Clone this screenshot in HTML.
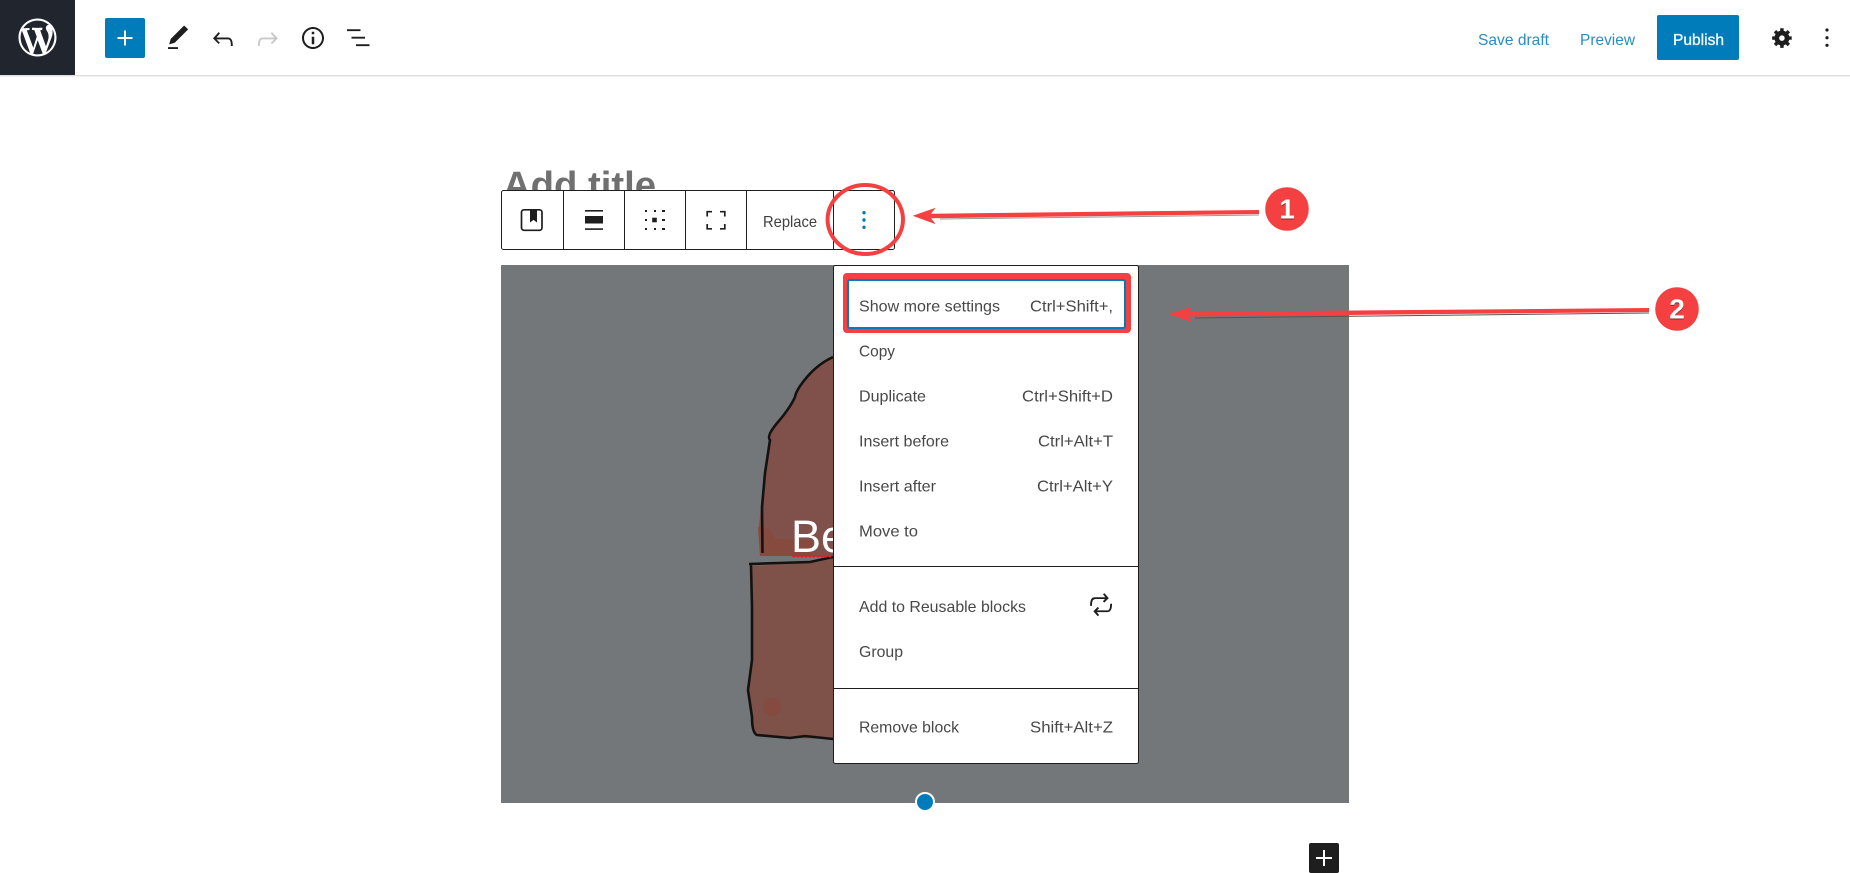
<!DOCTYPE html>
<html lang="en">
<head>
<meta charset="utf-8">
<title>Editor</title>
<style>
html,body{margin:0;padding:0;background:#fff;width:1850px;height:873px;overflow:hidden}
svg{display:block;position:absolute;left:0;top:0}
text{font-family:"Liberation Sans",sans-serif}
.m{font-size:16px;fill:#484848}
.b{font-size:16px;fill:#2a8cc0}
</style>
</head>
<body>
<svg width="1850" height="873" viewBox="0 0 1850 873" xmlns="http://www.w3.org/2000/svg">
<rect width="1850" height="873" fill="#fff"/>

<!-- Header -->
<rect x="0" y="75" width="1850" height="1.5" fill="#e0e0e0"/>
<rect width="75" height="75" fill="#20252e"/>
<g transform="translate(18.5 18.5) scale(1.9)" fill="#fff"><path d="M20 10c0-5.51-4.49-10-10-10C4.48 0 0 4.49 0 10c0 5.52 4.48 10 10 10 5.51 0 10-4.48 10-10zM7.78 15.37L4.37 6.22c.55-.02 1.17-.08 1.17-.08.5-.06.44-1.13-.06-1.11 0 0-1.45.11-2.37.11-.18 0-.37 0-.58-.01C4.12 2.69 6.87 1.11 10 1.11c2.33 0 4.45.87 6.05 2.34-.68-.11-1.65.39-1.65 1.58 0 .74.45 1.36.9 2.1.35.61.55 1.36.55 2.46 0 1.49-1.4 5-1.4 5l-3.03-8.37c.54-.02.82-.17.82-.17.5-.05.44-1.25-.06-1.22 0 0-1.44.12-2.38.12-.87 0-2.33-.12-2.33-.12-.5-.03-.56 1.2-.06 1.22l.92.08 1.26 3.41zM17.41 10c.24-.64.74-1.87.43-4.25.7 1.29 1.05 2.71 1.05 4.25 0 3.29-1.73 6.24-4.4 7.78.97-2.59 1.94-5.2 2.92-7.78zM6.1 18.09C3.12 16.65 1.11 13.53 1.11 10c0-1.3.23-2.48.72-3.59C3.25 10.3 4.67 14.2 6.1 18.09zm4.03-6.63l2.58 6.98c-.86.29-1.76.45-2.71.45-.79 0-1.57-.11-2.29-.33.81-2.38 1.62-4.74 2.42-7.1z"/></g>

<rect x="105" y="18" width="40" height="40" rx="2" fill="#007cba"/>
<g transform="translate(110 23) scale(1.25)" fill="#fff"><path d="M18 11.2h-5.2V6h-1.6v5.2H6v1.6h5.2V18h1.6v-5.2H18z"/></g>
<g transform="translate(163 23) scale(1.25)" fill="#1e1e1e"><path d="M20.1 5.1L16.9 2 6.2 12.7l-1.3 4.4 4.5-1.3L20.1 5.1zM4 20.8h8v-1.5H4v1.5z"/></g>
<g transform="translate(208 24) scale(1.25)" fill="#1e1e1e"><path d="M18.3 11.7c-.6-.6-1.4-.9-2.3-.9H6.7l2.9-3.3-1.1-1-4.5 5L8.5 16l1-1-2.7-2.7H16c.5 0 .9.2 1.3.5 1 1 1 3.4 1 4.5v.3h1.5v-.2c0-1.5 0-4.3-1.5-5.7z"/></g>
<g transform="translate(252.6 24) scale(1.25)" fill="#c8c8c8"><path d="M15.6 6.5l-1.1 1 2.9 3.3H8c-.9 0-1.7.3-2.3.9-1.4 1.5-1.4 4.2-1.4 5.7v.2h1.5v-.3c0-1.1 0-3.5 1-4.5.3-.3.7-.5 1.3-.5h9.2L14.5 15l1.1 1.1 4.6-4.6-4.6-5z"/></g>
<g transform="translate(298 23) scale(1.25)" fill="#1e1e1e"><path d="M12 3.2c-4.8 0-8.8 3.9-8.8 8.8 0 4.8 3.9 8.8 8.8 8.8 4.8 0 8.8-3.9 8.8-8.8 0-4.8-4-8.8-8.8-8.8zm0 16c-4 0-7.2-3.3-7.2-7.2C4.8 8 8 4.8 12 4.8s7.2 3.3 7.2 7.2c0 4-3.2 7.2-7.2 7.2zM11 17h2v-6h-2v6zm0-8h2V7h-2v2z"/></g>
<g transform="translate(343.25 22.8) scale(1.25)" fill="#1e1e1e"><path d="M13.8 5.2H3v1.5h10.8V5.2zm-3.6 12v1.5H21v-1.5H10.2zm7.2-6H6.6v1.5h10.8v-1.5z"/></g>

<text class="b" x="1478" y="45" textLength="71" lengthAdjust="spacingAndGlyphs">Save draft</text>
<text class="b" x="1580" y="45" textLength="55" lengthAdjust="spacingAndGlyphs">Preview</text>
<rect x="1657" y="15" width="82" height="45" rx="2" fill="#007cba"/>
<text x="1673" y="45" font-size="16" fill="#f4f8fb" stroke="#f4f8fb" stroke-width=".35" textLength="51" lengthAdjust="spacingAndGlyphs">Publish</text>
<g transform="translate(1771 26) scale(1.15)" fill="#1e1e1e"><path d="M18 12h-2.18c-.17.7-.44 1.35-.81 1.93l1.54 1.54-2.1 2.1-1.54-1.54c-.58.36-1.23.63-1.91.79V19H8v-2.18c-.68-.16-1.33-.43-1.91-.79l-1.54 1.54-2.12-2.12 1.54-1.54c-.36-.58-.63-1.23-.79-1.91H1V9.03h2.17c.16-.7.44-1.35.8-1.94L2.43 5.55l2.1-2.1 1.54 1.54c.58-.37 1.24-.64 1.93-.81V2h3v2.18c.68.16 1.33.43 1.91.79l1.54-1.54 2.12 2.12-1.54 1.54c.36.59.64 1.24.8 1.94H18V12zm-8.5.9c1.33 0 2.4-1.07 2.4-2.4s-1.07-2.4-2.4-2.4-2.4 1.07-2.4 2.4 1.07 2.4 2.4 2.4z" fill-rule="evenodd"/></g>
<g fill="#1e1e1e"><circle cx="1827" cy="30" r="1.6"/><circle cx="1827" cy="37.7" r="1.6"/><circle cx="1827" cy="45.3" r="1.6"/></g>

<!-- Title -->
<text x="503" y="198" font-size="38" font-weight="700" fill="#707070" textLength="153" lengthAdjust="spacingAndGlyphs">Add title</text>

<!-- Image block -->
<rect x="501" y="265" width="848" height="538" fill="#74777a"/>
<path d="M833 357Q818 364 807 377T795 397Q790 408 778 422T770 440L765 473 761 507 759 525 760 556 833 556Z" fill="#80504a"/>
<path d="M758 527Q770 526 775 539L812 540 812 556 760 556Z" fill="#864a3e"/>
<path d="M750 566L810 563 833 557 833 739 790 738 755 735 752 717 748 690 752 660 752 607Z" fill="#7f5249"/>
<circle cx="772" cy="707" r="9" fill="#854a40"/>
<path d="M833 357Q818 364 807 377T795 397Q790 408 778 422T770 440L765 473 762 507 762.5 553" fill="none" stroke="#141211" stroke-width="2.6"/>
<path d="M749 564L810 562 833 557M751 565L752 607 752 660 748 690 752 717Q752 733 757 735L790 738 805 736 833 739" fill="none" stroke="#141211" stroke-width="2.6"/>
<text x="791" y="552" font-size="45" fill="#fff">Be</text>
<path d="M792 555.5l2 1.5 2-1.5 2 1.5 2-1.5 2 1.5 2-1.5 2 1.5 2-1.5 2 1.5 2-1.5 2 1.5 2-1.5 2 1.5 2-1.5 2 1.5 2-1.5 2 1.5 2-1.5 2 1.5 2-1.5" fill="none" stroke="#e02020" stroke-width="1.3"/>

<circle cx="925" cy="802" r="9" fill="#007cba" stroke="#fff" stroke-width="2"/>

<!-- Toolbar -->
<rect x="501.5" y="190.5" width="393" height="59" rx="2" fill="#fff" stroke="#1e1e1e"/>
<g fill="#1e1e1e">
<rect x="563" y="190" width="1" height="59"/>
<rect x="624" y="190" width="1" height="59"/>
<rect x="685" y="190" width="1" height="59"/>
<rect x="746" y="190" width="1" height="59"/>
<rect x="833" y="190" width="1" height="59"/>
</g>
<rect x="521.5" y="209.8" width="20.5" height="20.5" rx="2.5" fill="none" stroke="#1e1e1e" stroke-width="1.7"/>
<path d="M530 210h7v12.5l-3.5-2.6-3.5 2.6z" fill="#1e1e1e"/>
<g fill="#1e1e1e">
<rect x="585" y="210" width="18" height="1.6"/>
<rect x="585" y="216" width="18" height="7.5"/>
<rect x="585" y="228.3" width="18" height="1.6"/>
</g>
<g fill="#1e1e1e">
<rect x="645" y="210" width="2" height="2"/><rect x="654" y="210" width="2" height="2"/><rect x="662" y="210" width="3" height="2"/>
<rect x="645" y="219" width="2" height="2"/><rect x="652.2" y="217.7" width="4.6" height="4.6"/><rect x="662" y="219" width="3" height="2"/>
<rect x="645" y="228" width="2" height="2"/><rect x="654" y="228" width="2" height="2"/><rect x="662" y="228" width="3" height="2"/>
</g>
<path d="M712 211.7h-4.8v4.8M720 211.7h4.8v4.8M707.2 224v4.8h4.8M724.8 224v4.8h-4.8" fill="none" stroke="#1e1e1e" stroke-width="1.7"/>
<text x="763" y="227" font-size="16" fill="#404040" textLength="54" lengthAdjust="spacingAndGlyphs">Replace</text>
<g fill="#007cba"><circle cx="864" cy="212.7" r="1.7"/><circle cx="864" cy="220" r="1.7"/><circle cx="864" cy="227.3" r="1.7"/></g>

<!-- Menu -->
<rect x="833.5" y="265.5" width="305" height="498" rx="2" fill="#fff" stroke="#1e1e1e"/>
<rect x="834" y="566" width="304" height="1" fill="#1e1e1e"/>
<rect x="834" y="688" width="304" height="1" fill="#1e1e1e"/>

<rect x="845" y="275" width="284" height="56" rx="2" fill="#f44040" stroke="#f44040" stroke-width="4"/>
<rect x="848" y="280" width="277" height="48" rx="2" fill="#fff" stroke="#007cba" stroke-width="2"/>

<text class="m" x="859" y="311.5" textLength="141" lengthAdjust="spacingAndGlyphs">Show more settings</text>
<text class="m" x="1030" y="311.5" textLength="83" lengthAdjust="spacingAndGlyphs">Ctrl+Shift+,</text>
<text class="m" x="859" y="356.5" textLength="36" lengthAdjust="spacingAndGlyphs">Copy</text>
<text class="m" x="859" y="401.5" textLength="67" lengthAdjust="spacingAndGlyphs">Duplicate</text>
<text class="m" x="1022" y="401.5" textLength="91" lengthAdjust="spacingAndGlyphs">Ctrl+Shift+D</text>
<text class="m" x="859" y="446.5" textLength="90" lengthAdjust="spacingAndGlyphs">Insert before</text>
<text class="m" x="1038" y="446.5" textLength="75" lengthAdjust="spacingAndGlyphs">Ctrl+Alt+T</text>
<text class="m" x="859" y="491.5" textLength="77" lengthAdjust="spacingAndGlyphs">Insert after</text>
<text class="m" x="1037" y="491.5" textLength="76" lengthAdjust="spacingAndGlyphs">Ctrl+Alt+Y</text>
<text class="m" x="859" y="536.5" textLength="59" lengthAdjust="spacingAndGlyphs">Move to</text>
<text class="m" x="859" y="612" textLength="167" lengthAdjust="spacingAndGlyphs">Add to Reusable blocks</text>
<g transform="translate(1086 590) scale(1.25)" fill="#1e1e1e"><path d="M7 7.2h8.2L13.5 9l1.1 1.1 3.6-3.6-3.5-4-1.1 1 1.9 2.3H7c-.9 0-1.7.3-2.3.9-1.4 1.5-1.4 4.2-1.4 5.8v.2h1.5v-.3c0-1.1 0-3.5 1-4.5.3-.2.7-.4 1.2-.4zm13.8 4V11h-1.5v.3c0 1.1 0 3.5-1 4.5-.3.3-.7.5-1.3.5H8.8l1.7-1.7-1.1-1.1L5.9 17l3.5 4 1.1-1-1.9-2.3H17c.9 0 1.7-.3 2.3-.9 1.5-1.4 1.5-4.2 1.5-5.8z"/></g>
<text class="m" x="859" y="657" textLength="44" lengthAdjust="spacingAndGlyphs">Group</text>
<text class="m" x="859" y="732.5" textLength="100" lengthAdjust="spacingAndGlyphs">Remove block</text>
<text class="m" x="1030" y="732.5" textLength="83" lengthAdjust="spacingAndGlyphs">Shift+Alt+Z</text>

<!-- Bottom inserter -->
<rect x="1309" y="843" width="30" height="30" rx="2" fill="#1e1e1e"/>
<rect x="1316" y="857" width="16" height="2" fill="#fff"/>
<rect x="1323" y="850" width="2" height="16" fill="#fff"/>

<!-- Annotations -->
<ellipse cx="865.3" cy="219.5" rx="37.7" ry="34.5" fill="none" stroke="#f44040" stroke-width="4"/>

<path d="M940 219L1259 215" fill="none" stroke="#999" stroke-width="1"/>
<path d="M912.7 215.7L935.7 207.7 931 213.7 1259 210 1259 214 931 218.2 935.7 224.3Z" fill="#f44040"/>
<circle cx="1287" cy="209" r="21.8" fill="#f44040"/>
<text x="1287" y="219.5" font-size="28" font-weight="700" text-anchor="middle" fill="#7a2a2a">1</text>
<text x="1287" y="218.5" font-size="28" font-weight="700" text-anchor="middle" fill="#fff">1</text>

<path d="M1195 318L1649 313" fill="none" stroke="#555" stroke-width="1"/>
<path d="M1168.5 314L1192 306.7 1188 312 1649 308 1649 312 1188 316.5 1192 322Z" fill="#f44040"/>
<circle cx="1677" cy="309" r="21.8" fill="#f44040"/>
<text x="1677" y="319.5" font-size="28" font-weight="700" text-anchor="middle" fill="#7a2a2a">2</text>
<text x="1677" y="318.5" font-size="28" font-weight="700" text-anchor="middle" fill="#fff">2</text>
</svg>
</body>
</html>
